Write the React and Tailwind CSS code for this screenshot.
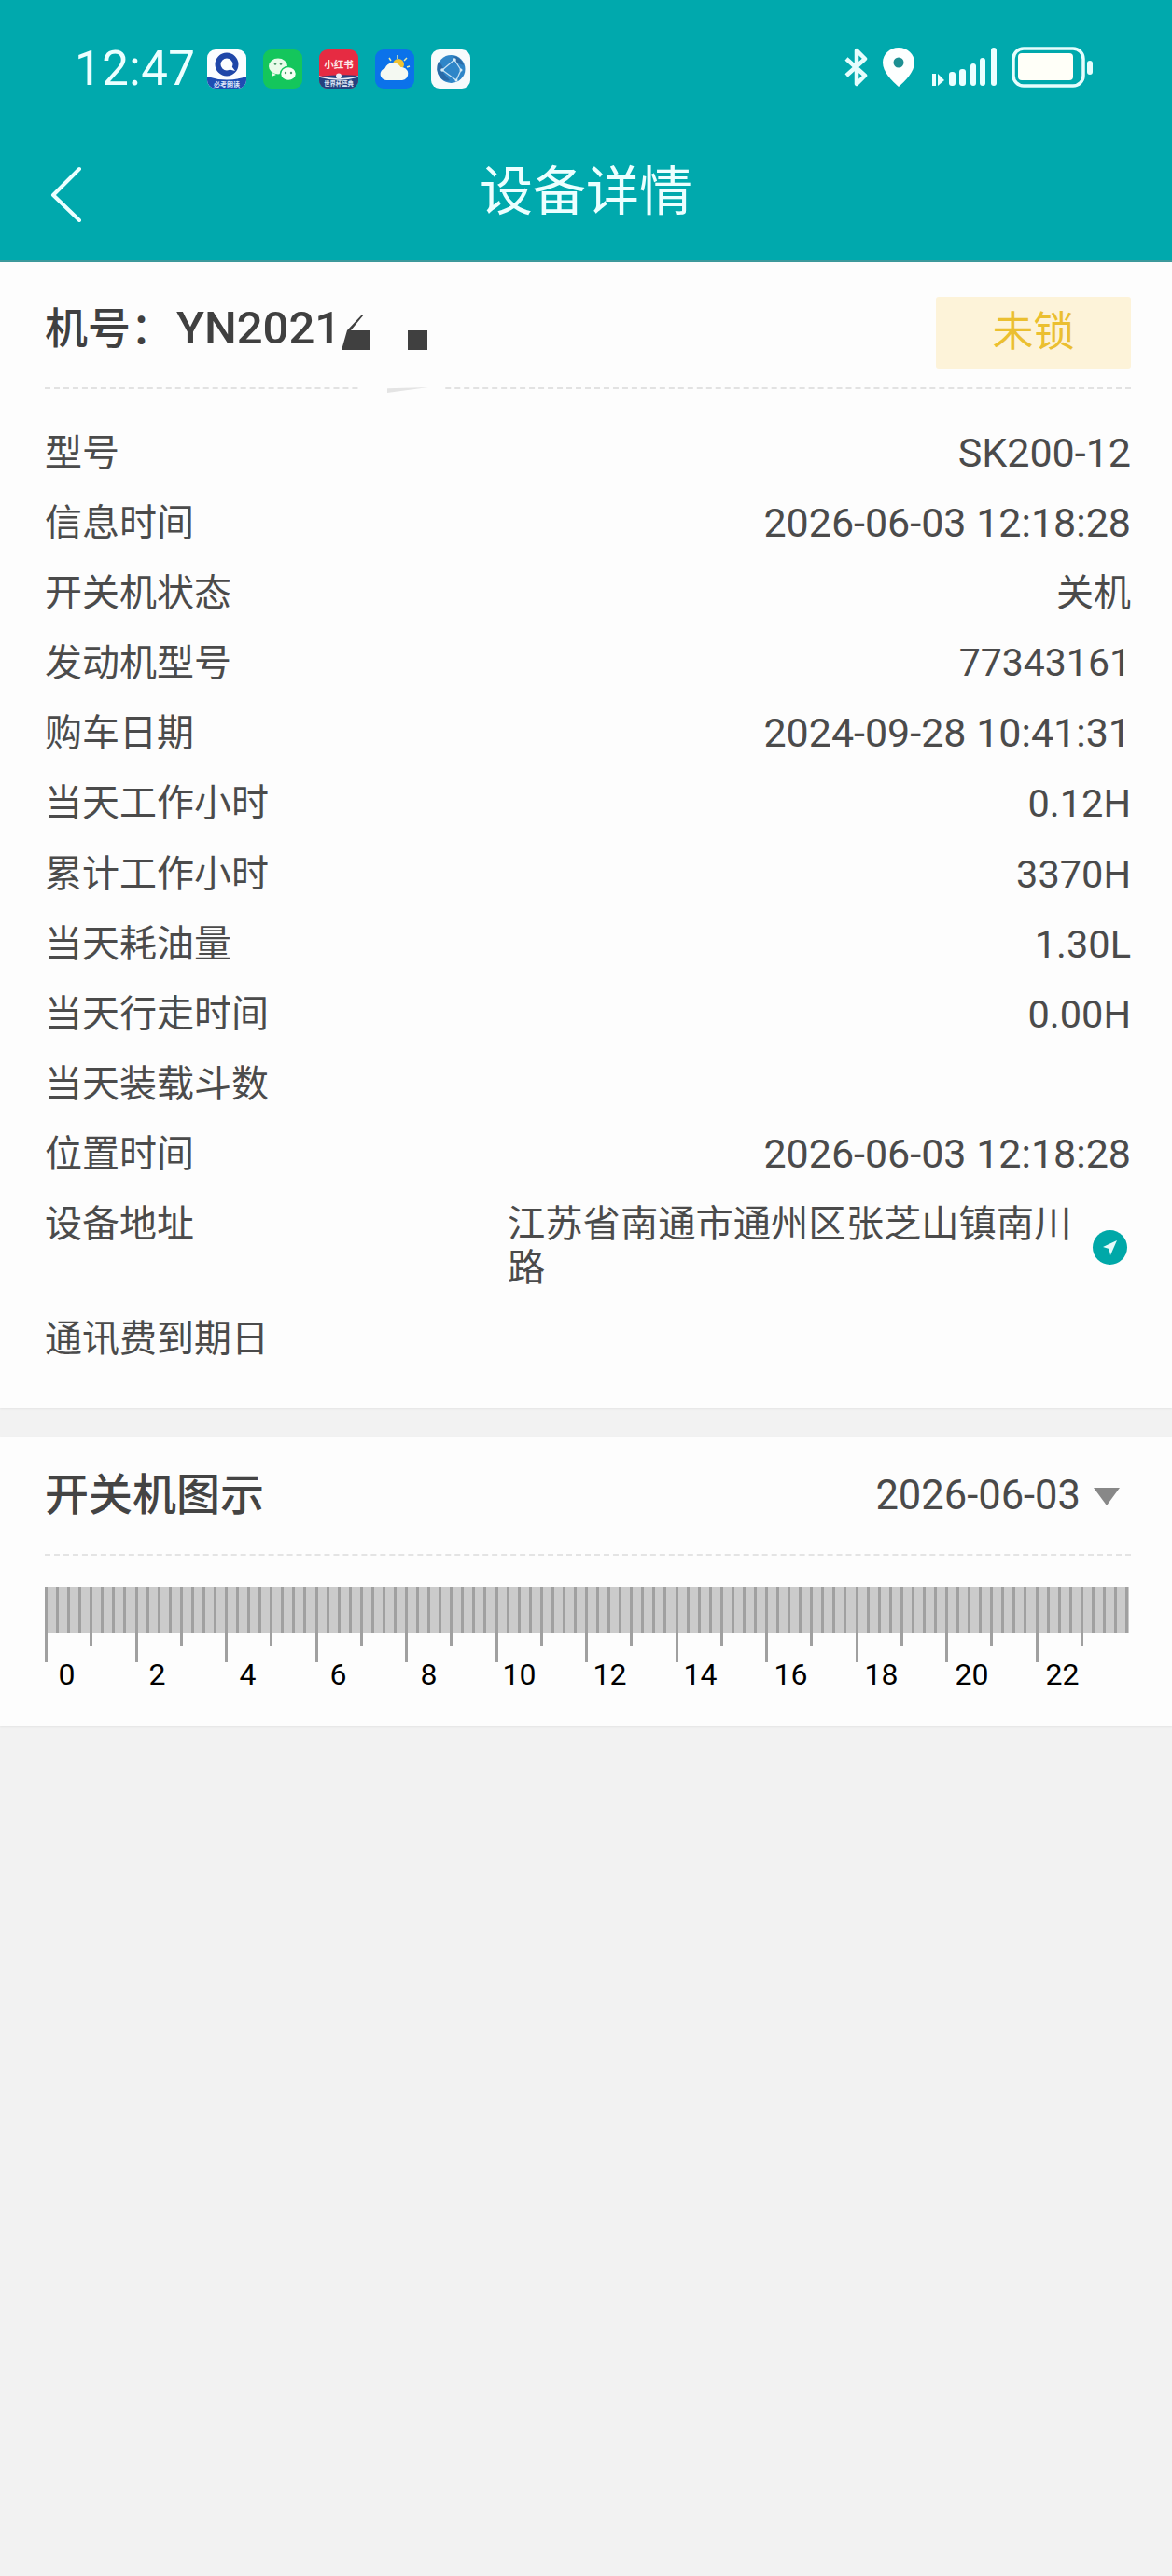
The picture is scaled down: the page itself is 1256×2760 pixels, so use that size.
import React from "react";

const rows = [
  ["型号", "SK200-12", "text-[43px]"],
  ["信息时间", "2026-06-03 12:18:28", "text-[43px]"],
  ["开关机状态", "关机", "text-[40px]"],
  ["发动机型号", "77343161", "text-[41px]"],
  ["购车日期", "2024-09-28 10:41:31", "text-[43px]"],
  ["当天工作小时", "0.12H", "text-[41.500px]"],
  ["累计工作小时", "3370H", "text-[41.500px]"],
  ["当天耗油量", "1.30L", "text-[41.500px]"],
  ["当天行走时间", "0.00H", "text-[41.500px]"],
  ["当天装载斗数", "", "text-[43px]"],
  ["位置时间", "2026-06-03 12:18:28", "text-[43px]"],
];

const hours = [0, 2, 4, 6, 8, 10, 12, 14, 16, 18, 20, 22];
const font = { fontFamily: "Roboto, 'Noto Sans CJK SC', sans-serif" };

function AppIcons() {
  return (
    <div className="flex items-center gap-[18px] ml-[12px]">
      <svg width="42" height="42" viewBox="0 0 42 42">
        <rect width="42" height="42" rx="9" fill="#fbfdff" />
        <path d="M0 29q21 7 42 0v4a9 9 0 0 1-9 9H9a9 9 0 0 1-9-9z" fill="#1f4db3" />
        <circle cx="21" cy="16" r="9.500" fill="none" stroke="#1f46a8" strokeWidth="6" />
        <path d="M24 15l6 8-8-2z" fill="#fbfdff" />
        <text x="21" y="39.500" textAnchor="middle" fontSize="7" fill="#dfe8fa" fontWeight="700">必考朗读</text>
      </svg>
      <svg width="42" height="42" viewBox="0 0 42 42">
        <rect width="42" height="42" rx="9" fill="#14c65c" />
        <ellipse cx="16" cy="18" rx="10" ry="8.500" fill="#e9fbe9" />
        <path d="M10 25l-1 4 5-2z" fill="#e9fbe9" />
        <ellipse cx="27" cy="26" rx="8.500" ry="7.500" fill="#f6fff4" stroke="#14c65c" strokeWidth="1.500" />
        <circle cx="13" cy="15.500" r="1.300" fill="#4a9a6a" />
        <circle cx="19" cy="15.500" r="1.300" fill="#4a9a6a" />
        <circle cx="24" cy="25" r="1.200" fill="#4a9a6a" />
        <circle cx="30" cy="25" r="1.200" fill="#4a9a6a" />
      </svg>
      <svg width="42" height="42" viewBox="0 0 42 42">
        <rect width="42" height="42" rx="9" fill="#e62b42" />
        <path d="M0 29q21 -3 42 -1v5a9 9 0 0 1-9 9H9a9 9 0 0 1-9-9z" fill="#25417f" />
        <path d="M0 29q21 6 42 0" fill="none" stroke="#e9edf5" strokeWidth="1.500" />
        <text x="21" y="20" textAnchor="middle" fontSize="10.500" fill="#fde9ea" fontWeight="700">小红书</text>
        <circle cx="21" cy="28.500" r="3" fill="#e9edf5" />
        <text x="21" y="39" textAnchor="middle" fontSize="6.300" fill="#dfe6f5" fontWeight="700">世界杯盛典</text>
      </svg>
      <svg width="42" height="42" viewBox="0 0 42 42">
        <rect width="42" height="42" rx="9" fill="#0b72ea" />
        <path d="M24 6v4M34 9l-3 3M15 9l2 3M37 18l-3 1" stroke="#e3ecb0" strokeWidth="1.500" />
        <circle cx="25" cy="16" r="6" fill="#f0c332" />
        <path d="M12 33a6.500 6.500 0 0 1-1.500-12.800 9.500 9.500 0 0 1 17-1.200 7 7 0 0 1 1.500 14z" fill="#f4f9f2" />
      </svg>
      <svg width="42" height="42" viewBox="0 0 42 42">
        <rect width="42" height="42" rx="9" fill="#f6fbfc" />
        <circle cx="21.500" cy="21" r="15" fill="#2f86c8" />
        <path d="M8 13q6 5 5 12l7 8q-6 2-10-3a15 15 0 0 1-2-17zM24 7q8 1 11 10l-8-3z" fill="#2a6aa6" />
        <path d="M12 22L25 11M12 22l15 11M25 11l7 11M27 33l5-11" stroke="#c6e2f3" strokeWidth="1.300" fill="none" />
        <circle cx="12" cy="22" r="1.800" fill="#d6ecf7" />
        <circle cx="25" cy="11" r="1.800" fill="#d6ecf7" />
        <circle cx="32" cy="22" r="1.500" fill="#d6ecf7" />
        <circle cx="27" cy="33" r="1.500" fill="#d6ecf7" />
      </svg>
    </div>
  );
}

function StatusRight() {
  return (
    <div className="flex items-center">
      <svg width="28" height="42" viewBox="0 0 28 42" fill="none" stroke="#e6fdfd" strokeWidth="4.500">
        <path d="M3 12l20 18-9 9V3l9 9L3 30" strokeLinejoin="round" />
      </svg>
      <svg width="34" height="42" viewBox="0 0 34 42" className="ml-[14px]">
        <path d="M17 0c9.500 0 17 7 17 16 0 10-10 20-17 26C10 36 0 26 0 16 0 7 7.500 0 17 0z" fill="#fdffff" />
        <circle cx="17" cy="16" r="5.500" fill="#1d8f92" />
      </svg>
      <svg width="72" height="42" viewBox="0 0 72 42" className="ml-[16px]" fill="#eaffff">
        <rect x="3" y="28" width="4" height="13" />
        <path d="M9 28l7 7-7 6z" />
        <rect x="21" y="26" width="7" height="15" rx="3" />
        <rect x="32" y="23" width="7" height="18" rx="3" />
        <rect x="44" y="17" width="6" height="24" rx="3" />
        <rect x="54" y="11" width="6" height="30" rx="3" />
        <rect x="66" y="0" width="6" height="41" rx="3" />
      </svg>
      <svg width="88" height="44" viewBox="0 0 88 44" className="ml-[16px]">
        <rect x="2" y="2" width="75" height="40" rx="11" fill="none" stroke="#e6fdfd" strokeWidth="3.500" />
        <rect x="7" y="7" width="59" height="29" rx="4" fill="#fffff8" />
        <rect x="81" y="15" width="6" height="15" rx="3" fill="#e6fdfd" />
      </svg>
    </div>
  );
}

function Ruler() {
  const ticks = Array.from({ length: 97 }, (_, i) => i);
  return (
    <div className="h-[108px] w-[1162px] ml-[48px]">
      <div className="h-[81px]">
        <div className="h-[50px] bg-[#cbcbcb] flex justify-between">
          {ticks.map((i) => (
            <div
              key={i}
              className={
                i === 96
                  ? "w-[3px] h-[50px] bg-[#a0a0a0] shrink-0"
                  : i % 8 === 0
                    ? "w-[3px] h-[81px] bg-[#a0a0a0] shrink-0"
                    : i % 4 === 0
                      ? "w-[3px] h-[64px] bg-[#a0a0a0] shrink-0"
                      : "w-[3px] h-[50px] bg-[#a0a0a0] shrink-0"
              }
            />
          ))}
        </div>
      </div>
      <div className="grid grid-cols-12 w-[1164px] -ml-[25px] -mt-[2px]">
        {hours.map((h) => (
          <div key={h} className="text-center text-[32px] leading-[30px] text-black">
            {h}
          </div>
        ))}
      </div>
    </div>
  );
}

export default function App() {
  return (
    <div className="w-[1256px] h-[2760px] bg-[#f2f2f2] overflow-hidden" style={font}>
      <header className="h-[281px] bg-[#00a9ad] border-b-2 border-[#3d9a9c] text-[#ecffff]">
        <div className="h-[141px] flex items-start justify-between pl-[80px] pr-[84px] pt-[50px]">
          <div className="flex items-center mt-[2px]">
            <span className="text-[51px] leading-[44px] tracking-[0.5px]">12:47</span>
            <AppIcons />
          </div>
          <StatusRight />
        </div>
        <div className="relative h-[138px] flex items-start justify-center">
          <svg width="36" height="60" viewBox="0 0 36 60" className="absolute left-[52px] top-[37px]" fill="none" stroke="#ecffff" strokeWidth="4" strokeLinecap="round" strokeLinejoin="round">
            <path d="M33 3L5 31l28 27" />
          </svg>
          <h1 className="text-[57px] leading-[64px] mt-[33px] font-normal">设备详情</h1>
        </div>
      </header>

      <section className="h-[1228px] bg-[#fdfdfd] shadow-[0_1px_2px_rgba(0,0,0,0.06)] pl-[48px] pr-[44px]">
        <div className="relative h-[136px] flex items-center justify-between border-b-2 border-dashed border-[#e2e2e2]">
          <div className="flex items-baseline text-[46px] font-medium text-[#404040] mt-[7px]">
            <span>机号：</span>
            <span className="ml-[3px] text-[49px]">YN2021</span>
          </div>
          <div className="w-[209px] h-[77px] mt-[16px] rounded-[3px] bg-[#fdf3d9] flex items-center justify-center text-[44px] text-[#ebbf30]">
            未锁
          </div>
          <svg width="32" height="38" viewBox="0 0 32 38" className="absolute left-[318px] top-[56px]" fill="#404040">
            <path d="M0 38L6 17 22 0h2L10 17h20v21z" />
          </svg>
          <span className="absolute left-[389px] top-[73px] w-[21px] h-[21px] bg-[#404040]" />
          <div className="absolute left-[337px] bottom-[-6px] h-[9px] w-[92px] bg-[#fdfdfd]" />
          <div className="absolute left-[367px] bottom-[-6px] h-[6px] w-[44px] bg-[#e4e4e4] [clip-path:polygon(0_100%,0_20%,100%_0)]" />
        </div>

        <div className="pt-[31px] text-[40px] leading-[75px] text-[#4b4b4b]">
          {rows.map(([k, v, size]) => (
            <div key={k} className="h-[75.100px] flex justify-between">
              <span>{k}</span>
              <span className={size}>{v}</span>
            </div>
          ))}
          <div className="flex items-start h-[123px]">
            <span className="w-[496px] shrink-0">设备地址</span>
            <span className="w-[610px] shrink-0 text-[40.300px] leading-[47px] pt-[14px]">江苏省南通市通州区张芝山镇南川路</span>
            <span className="shrink-0 ml-[17px] mt-[44px] w-[37px] h-[37px] rounded-full bg-[#00a8a8] flex items-center justify-center">
              <svg width="20" height="20" viewBox="0 0 20 20"><path d="M17 2L10 18 8.500 11 2 9z" fill="#e8fbfb" /></svg>
            </span>
          </div>
          <div className="h-[75px]">通讯费到期日</div>
        </div>
      </section>

      <section className="mt-[31px] h-[309px] bg-[#fdfdfd] shadow-[0_1px_2px_rgba(0,0,0,0.06)]">
        <div className="ml-[48px] mr-[44px] h-[127px] flex items-center justify-between border-b-2 border-dashed border-[#e4e4e4]">
          <h2 className="text-[47px] font-medium text-[#444]">开关机图示</h2>
          <div className="flex items-center text-[#4a4a4a] mr-[12px]">
            <span className="text-[43.500px]">2026-06-03</span>
            <svg width="28" height="20" viewBox="0 0 28 20" className="ml-[14px]"><path d="M0 1h28L14 20z" fill="#888" /></svg>
          </div>
        </div>
        <div className="pt-[33px]">
          <Ruler />
        </div>
      </section>
    </div>
  );
}
